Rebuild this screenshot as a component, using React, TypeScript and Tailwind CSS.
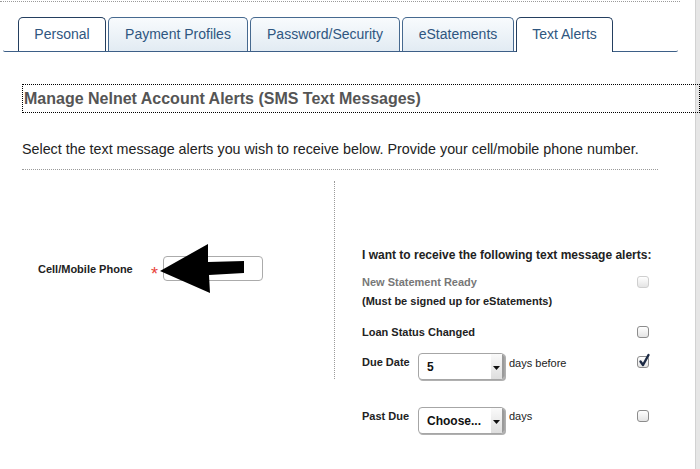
import React from "react";

function Checkbox({ checked = false, disabled = false }: { checked?: boolean; disabled?: boolean }) {
  return (
    <div
      className={`relative w-[12px] h-[12px] rounded-[3px] border bg-gradient-to-b from-white to-[#e4e4e4] ${
        disabled ? "border-[#cfcfcf]" : "border-[#8c8c8c]"
      }`}
    >
      {checked && (
        <svg className="absolute left-[0px] top-[-4px]" width="14" height="15" viewBox="0 0 14 15">
          <path d="M2.5 8.5 L5 12 L10.5 2" fill="none" stroke="#1c2a44" strokeWidth="2.4" strokeLinecap="round" strokeLinejoin="round" />
        </svg>
      )}
    </div>
  );
}

function Select({ value }: { value: string }) {
  return (
    <div className="w-[87px] h-[27px] rounded-[4px] border border-[#a6a6a6] bg-white flex items-stretch shadow-[1px_1px_0_#b0b0b0] overflow-hidden">
      <div className="flex-1 pl-[8px] flex items-center text-[12px] font-bold text-[#111]">{value}</div>
      <div className="w-[13px] bg-gradient-to-b from-[#fafafa] to-[#dedede] border-r-2 border-[#9a9a9a] flex items-center justify-center">
        <svg width="7" height="4" viewBox="0 0 7 4" className="mt-[3px]">
          <path d="M0 0 L7 0 L3.5 4 Z" fill="#111" />
        </svg>
      </div>
    </div>
  );
}

const tabs = [
  { label: "Personal", w: "w-[88px]", active: "personal" },
  { label: "Payment Profiles", w: "w-[140px]", active: "" },
  { label: "Password/Security", w: "w-[150px]", active: "" },
  { label: "eStatements", w: "w-[112px]", active: "" },
  { label: "Text Alerts", w: "w-[97px]", active: "current" },
];

export default function App() {
  return (
    <div className="w-[700px] h-[469px] bg-white overflow-hidden flex font-['Liberation_Sans',Arial,sans-serif] text-[#222]">
      <div className="w-[695px] flex flex-col">
        <div className="mt-px w-[680px] border-t border-dotted border-[#9a9a9a]" />

        {/* Tabs */}
        <div className="mt-[15px] ml-[3px] w-[675px] h-[35px] flex items-end gap-[2px] pl-[15px] border-b border-[#3d5f87] rounded-b-[2px]">
          {tabs.map((t) => {
            if (t.active === "current") {
              return (
                <div
                  key={t.label}
                  className={`${t.w} h-[35px] mb-[-1px] bg-white border-x border-t border-[#243f60] rounded-t-[5px] flex items-center justify-center pb-[1px] text-[14px] text-[#2f5680]`}
                >
                  {t.label}
                </div>
              );
            }
            if (t.active === "personal") {
              return (
                <div
                  key={t.label}
                  className={`${t.w} h-[34px] bg-white border-x border-t border-[#243f60] rounded-t-[5px] flex items-center justify-center text-[14px] text-[#2f5680]`}
                >
                  {t.label}
                </div>
              );
            }
            return (
              <div
                key={t.label}
                className={`${t.w} h-[34px] bg-gradient-to-b from-[#f8fbfd] to-[#e2ebf3] border-x border-t border-[#46698f] rounded-t-[5px] flex items-center justify-center text-[14px] text-[#2f5680]`}
              >
                {t.label}
              </div>
            );
          })}
        </div>

        {/* Heading box */}
        <div className="relative mt-[32px] ml-[22px] w-[678px] h-[29px] border border-dotted border-black flex items-center pl-[1px]">
          <span className="text-[16px] font-bold text-[#555] whitespace-nowrap">Manage Nelnet Account Alerts (SMS Text Messages)</span>
        </div>

        <p className="mt-[28px] ml-[22px] text-[14.3px] leading-[17px] text-[#222] whitespace-nowrap">
          Select the text message alerts you wish to receive below. Provide your cell/mobile phone number.
        </p>

        <div className="mt-[11px] ml-[22px] w-[636px] border-t border-dotted border-[#9a9a9a]" />

        <div className="mt-[11px] ml-[22px] flex items-start">
          {/* Left column */}
          <div className="relative w-[313px] h-[198px] border-r border-dotted border-[#9a9a9a] pt-[75px] pl-[16px]">
            <div className="flex items-center h-[25px]">
              <div className="w-[113px] text-[11px] font-bold text-[#222] whitespace-nowrap pt-[1px]">Cell/Mobile Phone</div>
              <div className="w-[12px] text-[18px] text-[#e8433a] pt-[11px] leading-[14px]">*</div>
              <div className="w-[100px] h-[25px] rounded-[4px] border border-[#ababab] bg-white" />
            </div>
            <svg className="absolute left-[136px] top-[61px]" width="90" height="55" viewBox="0 0 90 55">
              <polygon points="2,29 50,2 50,20 86,19 86,31 51,33 52,51" fill="#000" />
            </svg>
          </div>

          {/* Right column */}
          <div className="w-[314px] pl-[27px] pt-[67px] text-[11px]">
            <div className="text-[12px] font-bold leading-[14px] text-[#222] whitespace-nowrap">I want to receive the following text message alerts:</div>

            <div className="mt-[13px] flex items-center justify-between leading-[14px]">
              <span className="font-bold text-[#777]">New Statement Ready</span>
              <Checkbox disabled />
            </div>
            <div className="mt-[5px] font-bold leading-[14px] text-[#222]">(Must be signed up for eStatements)</div>

            <div className="mt-[17px] flex items-center justify-between leading-[14px]">
              <span className="font-bold text-[#222]">Loan Status Changed</span>
              <Checkbox />
            </div>

            <div className="mt-[14px] flex items-start h-[27px] leading-[14px]">
              <span className="w-[56px] pt-[2px] font-bold text-[#222]">Due Date</span>
              <Select value="5" />
              <span className="ml-[4px] pt-[3px] text-[#222]">days before</span>
              <div className="ml-auto mt-[3px]">
                <Checkbox checked />
              </div>
            </div>

            <div className="mt-[27px] flex items-start h-[27px] leading-[14px]">
              <span className="w-[56px] pt-[2px] font-bold text-[#222]">Past Due</span>
              <Select value="Choose..." />
              <span className="ml-[4px] pt-[2px] text-[#222]">days</span>
              <div className="ml-auto mt-[3px]">
                <Checkbox />
              </div>
            </div>
          </div>
        </div>
      </div>
      <div className="w-[5px] bg-[#e6e6e6] border-l border-[#d2d2d2]" />
    </div>
  );
}
